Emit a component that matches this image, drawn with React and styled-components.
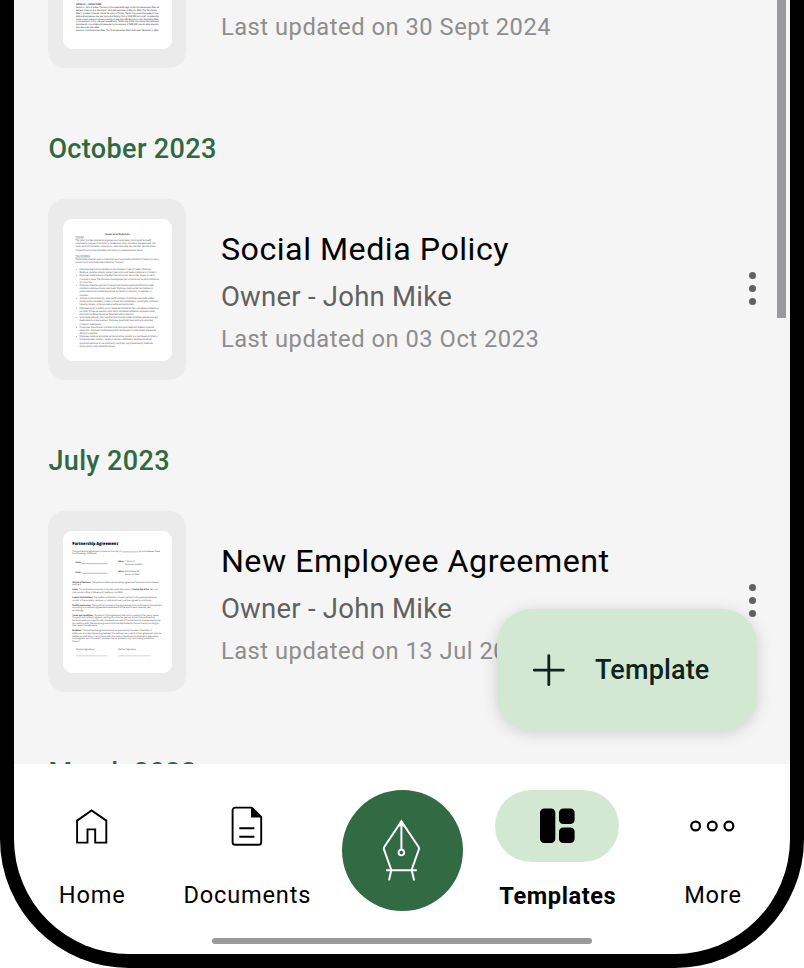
import React from "react"
import styled, { createGlobalStyle } from "styled-components"

const GlobalStyle = createGlobalStyle`
  *, *::before, *::after {
    box-sizing: border-box;
  }

  body {
    margin: 0;
    background: #fff;
    font-family: Roboto, "Liberation Sans", sans-serif;
  }
`

const Phone = styled.div`
  width: 804px;
  height: 968px;
  border: 14px solid #000;
  border-top: 0;
  border-radius: 0 0 129px 129px;
  background: #fff;
  overflow: hidden;
  display: flex;
  flex-direction: column;
`

const Screen = styled.main`
  position: relative;
  height: 764px;
  flex-shrink: 0;
  background: #f5f5f5;
  overflow: hidden;
`

const List = styled.div`
  margin-top: -113px;
  padding: 0 34px 0 34.4px;
`

const GroupTitle = styled.h2`
  margin: 64px 0 35px;
  height: 32px;
  line-height: 34px;
  font-size: 27px;
  font-weight: 500;
  letter-spacing: 0.36px;
  color: #2f6942;
  white-space: nowrap;
`

const Row = styled.article`
  display: flex;
  align-items: stretch;
  height: 181px;
`

const Thumb = styled.div`
  width: 138px;
  flex-shrink: 0;
  padding: 20px 14px 19px 14.4px;
  border-radius: 17px;
  background: #ebebeb;
`

const Paper = styled.svg`
  display: block;
  width: 109.6px;
  height: 142px;
  border-radius: 9px;
  background: #fff;
  font-family: ${props => props.$font};
  text-rendering: geometricPrecision;
`

const Details = styled.div`
  flex: 1;
  display: flex;
  flex-direction: column;
  justify-content: flex-end;
  padding: 0 0 25px 34.5px;
  white-space: nowrap;
`

const Name = styled.div`
  height: 48px;
  margin-bottom: 1px;
  line-height: 48px;
  font-size: 32.2px;
  letter-spacing: 0.52px;
  color: #000;
`

const Owner = styled.div`
  height: 46px;
  margin-bottom: 3px;
  line-height: 46px;
  font-size: 27.5px;
  letter-spacing: 0.25px;
  color: #616161;
`

const Updated = styled.div`
  height: 32px;
  line-height: 32px;
  font-size: 23.7px;
  letter-spacing: 0.53px;
  color: #8f8d8d;
`

const Kebab = styled.div`
  width: 7px;
  height: 33px;
  margin: 73px 0 0;
  display: flex;
  flex-direction: column;
  justify-content: space-between;

  span {
    width: 7px;
    height: 7px;
    border-radius: 50%;
    background: #616161;
  }
`

const ScrollThumb = styled.div`
  position: absolute;
  top: 0;
  right: 4px;
  width: 9px;
  height: 318px;
  background: #9b999e;
`

const Fab = styled.button`
  position: absolute;
  right: 33px;
  bottom: 34px;
  width: 260px;
  height: 121px;
  padding: 2px 0 0 35px;
  border: 0;
  border-radius: 35px;
  background: #d2e8d3;
  box-shadow: 0 3px 16px rgba(0, 0, 0, 0.16);
  display: flex;
  align-items: center;
  gap: 29px;
  font-family: inherit;
  font-size: 27px;
  font-weight: 500;
  letter-spacing: 0.15px;
  line-height: 33px;
  color: #10231a;
`

const NavBar = styled.nav`
  height: 174px;
  display: grid;
  grid-template-columns: repeat(5, 1fr);
`

const NavItem = styled.div`
  display: flex;
  flex-direction: column;
  align-items: center;
  padding-top: 26px;
`

const Pill = styled.div`
  width: 124px;
  height: 72px;
  border-radius: 36px;
  background: ${props => (props.$active ? "#d2e8d3" : "transparent")};
  display: flex;
  align-items: center;
  justify-content: center;
`

const NavLabel = styled.span`
  margin-top: ${props => (props.$active ? "18px" : "17px")};
  padding-left: 1.2px;
  height: 32px;
  line-height: 32px;
  font-size: 23.6px;
  font-weight: ${props => (props.$active ? 700 : 400)};
  letter-spacing: ${props => (props.$active ? "0.6px" : "0.8px")};
  color: #000;
`

const SignButton = styled.div`
  width: 121px;
  height: 121px;
  margin-left: 1px;
  border-radius: 50%;
  background: #326a44;
  display: flex;
  align-items: center;
  justify-content: center;
`

const HomeIndicator = styled.div`
  width: 380px;
  height: 6px;
  border-radius: 3px;
  background: #999;
  align-self: center;
`

const HomeIcon = () => (
  <svg width="36" height="40" viewBox="0 0 36 40" fill="none">
    <path
      d="M3.1 36.6V14.6L17.6 4.4L32.3 14.6V36.6H21.2V23.4H13.5V36.6Z"
      stroke="#000"
      strokeWidth="1.9"
    />
  </svg>
)

const DocumentIcon = () => (
  <svg width="36" height="40" viewBox="0 0 36 40" fill="none">
    <path
      d="M22.8 1.6H6.2A2.6 2.6 0 0 0 3.6 4.2V36.2A2.6 2.6 0 0 0 6.2 38.8H29.6A2.6 2.6 0 0 0 32.2 36.2V11Z"
      stroke="#000"
      strokeWidth="1.9"
      strokeLinejoin="round"
    />
    <path d="M22 1.4V11.5H32.5Z" fill="#000" />
    <path d="M10.3 22.3H25.4M10.3 30.7H25.4" stroke="#000" strokeWidth="1.9" />
  </svg>
)

const TemplatesIcon = () => (
  <svg width="36" height="40" viewBox="0 0 36 40">
    <rect x="1" y="2.4" width="15.3" height="34.7" rx="4.2" />
    <rect x="20" y="2.4" width="15.6" height="15.7" rx="4.2" />
    <rect x="20" y="21.4" width="15.6" height="15.7" rx="4.2" />
  </svg>
)

const MoreIcon = () => (
  <svg width="46" height="40" viewBox="0 0 46 40" fill="none">
    {[6.6, 23.3, 39.9].map(x => (
      <circle key={x} cx={x} cy="20" r="4.4" stroke="#000" strokeWidth="2.2" />
    ))}
  </svg>
)

const NibIcon = () => (
  <svg width="44" height="64" viewBox="0 0 44 64" fill="none">
    <path
      d="M11.3 51L3.9 30.2Q3.5 29 4.2 28L21.4 2.4L38.6 28Q39.3 29 38.9 30.2L31.6 51M6 51.2H36.8M11.3 51L9 61.4M31.6 51L34.2 61.4M21.4 6V30.4"
      stroke="#fff"
      strokeWidth="2"
    />
    <path d="M21.4 0.6L25.4 8L21.4 7L17.4 8Z" fill="#fff" />
    <circle cx="21.4" cy="33.5" r="2.8" stroke="#fff" strokeWidth="1.9" />
  </svg>
)

const PlusIcon = () => (
  <svg width="34" height="34" viewBox="0 0 34 34">
    <path
      d="M16.8 1.7V30.7M2.3 16.2H31.3"
      stroke="#10231a"
      strokeWidth="2.8"
      strokeLinecap="round"
    />
  </svg>
)

// each line: start x, baseline y, end x, text, bold
const leaseLines = [
  [107, 1, 160, "signed by the parties."],
  [107, 16, 183, "ARTICLE I - LEASE TERM", true],
  [107, 24, 357, "Section 1. Term of Lease. The term of this Lease shall begin on the Commencement Date, as"],
  [107, 33, 351, "defined in Section 2 of this Article I, and shall terminate on May 31, 2024 (The Termination"],
  [107, 42, 355, "Date\"), provided, however, that at the option of Tenant, Tenant may extend the Lease for five"],
  [107, 51, 356, "additional successive one-year terms at a Monthly Rent of $100,000 per month, provided that"],
  [107, 59, 355, "notice of such intention is given in writing no less than 180 days prior to the Termination Date"],
  [107, 67, 356, "or the expiration of any one-year renewal term. Tenant may at any time cancel this Lease and"],
  [107, 76, 355, "terminate all of its obligations hereunder by the payment of $300,000, plus all other amounts"],
  [107, 84, 178, "then due under this Lease."],
  [107, 93, 357, "Section 2. Commencement Date. The \"Commencement Date\" shall mean December 1, 2023."],
]

const policyLines = [
  [195, 133, 270, "Sample Social Media Policy", true],
  [106, 143, 130, "PURPOSE"],
  [106, 152, 334, "This policy provides guidance for employee use of social media, which should be broadly"],
  [106, 162, 347, "understood for purposes of this policy to include blogs, wikis, microblogs, message boards, chat"],
  [106, 172, 348, "rooms, electronic newsletters, online forums, social networking sites, and other sites and services"],
  [106, 182, 310, "that permit users to share information with others in a contemporaneous manner."],
  [106, 201, 149, "PROCEDURES"],
  [106, 211, 357, "The following principles apply to professional use of social media on behalf of [Company] as well as"],
  [106, 220, 252, "personal use of social media when referencing [Company]."],
  [118, 240, 332, "Employees need to know and adhere to the [Company's Code of Conduct, Employee"],
  [118, 249, 350, "Handbook, and other company policies] when using social media in reference to [Company]."],
  [118, 259, 345, "Employees should be aware of the effect their actions may have on their images, as well as"],
  [118, 269, 357, "[Company's] image. The information that employees post or publish may be public information"],
  [118, 278, 156, "for a long time."],
  [118, 288, 340, "Employees should be aware that [Company] may observe content and information made"],
  [118, 298, 338, "available by employees through social media. Employees should use their best judgment in"],
  [118, 307, 335, "posting material that is neither inappropriate nor harmful to [Company], its employees, or"],
  [118, 317, 145, "customers."],
  [118, 327, 343, "Although not an exclusive list, some specific examples of prohibited social media conduct"],
  [118, 336, 356, "include posting commentary, content, or images that are defamatory, pornographic, proprietary,"],
  [118, 346, 283, "harassing, libelous, or that can create a hostile work environment."],
  [118, 356, 357, "Employees are not to publish, post or release any information that is considered confidential or"],
  [118, 366, 344, "not public. If there are questions about what is considered confidential, employees should"],
  [118, 375, 282, "check with the Human Resources Department and/or supervisor."],
  [118, 385, 353, "Social media networks, blogs and other types of online content sometimes generate press and"],
  [118, 394, 339, "media attention or legal questions. Employees should refer these inquiries to authorized"],
  [118, 404, 185, "[Company] spokespersons."],
  [118, 414, 342, "If employees find encounter a situation while using social media that threatens to become"],
  [118, 423, 348, "antagonistic, employees should disengage from the dialogue in a polite manner and seek the"],
  [118, 433, 174, "advice of a supervisor."],
  [118, 443, 354, "Employees should get appropriate permission before you refer to or post images of current or"],
  [118, 452, 335, "former employees, members, vendors or suppliers. Additionally, employees should get"],
  [118, 462, 341, "appropriate permission to use a third party's copyrights, copyrighted material, trademarks,"],
  [118, 472, 226, "service marks or other intellectual property."],
]

const policyBullets = [238, 257, 286, 325, 354, 383, 412, 441]

const partnershipLines = [
  [96, 154, 243, "This partnership agreement is made on this day of"],
  [297, 154, 360, "by and between these"],
  [96, 162, 171, "the following individuals:"],
  [106, 190, 122, "Name:", true],
  [234, 187, 252, "Address:", true],
  [254, 187, 284, "17 Windsor St"],
  [254, 195, 306, "Sacramento, CA 94203"],
  [106, 219, 122, "Name:", true],
  [234, 215, 252, "Address:", true],
  [254, 215, 297, "4356 Parkway Dr"],
  [254, 224, 298, "Anaheim, CA 92805"],
  [96, 249, 153, "Nature of Business.", true],
  [155, 249, 357, "The partners listed above hereby agree that they shall be considered"],
  [96, 256, 123, "partners."],
  [96, 271, 114, "Name.", true],
  [116, 271, 275, "The partnership shall be conducted under the name of"],
  [277, 271, 340, "Carolyn Day & Son, Inc.", true],
  [343, 271, 354, "and"],
  [96, 279, 248, "shall maintain offices at 9 Bowman St, Westwood, CA 93550."],
  [96, 294, 158, "Capital Contributions.", true],
  [160, 294, 350, "The capital contribution of each partner to the partnership shall"],
  [96, 302, 335, "consist of the property, services, or cash which each partner agrees to contribute."],
  [96, 318, 153, "Profits and Losses.", true],
  [155, 318, 366, "The profits and losses of the partnership shall be divided by the partners"],
  [96, 325, 333, "according to a mutually agreeable schedule and at the end of each calendar year"],
  [96, 333, 131, "accordingly."],
  [96, 348, 160, "Terms and Conditions.", true],
  [162, 348, 356, "The terms of this agreement shall be for a period of ten years, unless"],
  [96, 355, 345, "the partners mutually agree in writing on a shorter period. Should the partnership"],
  [96, 363, 362, "be terminated by a majority vote, the assets and cash of the partnership shall be used to pay"],
  [96, 371, 356, "all creditors, with the remaining amounts to be distributed to the partners according to"],
  [96, 379, 172, "their proportionate share."],
  [96, 394, 125, "Disputes.", true],
  [127, 394, 335, "This partnership agreement shall be governed by the laws of the State of"],
  [96, 402, 363, "California. Any disputes arising between the partners as a result of this agreement shall be"],
  [96, 410, 356, "settled by arbitration in accordance with the rules of the American Arbitration Association"],
  [96, 417, 342, "and judgment upon the award rendered may be entered in any court having jurisdiction"],
  [96, 425, 119, "thereof."],
  [108, 452, 161, "Partner Signature"],
  [234, 452, 287, "Partner Signature"],
]

const DocLines = ({ lines, size, color }) =>
  lines.map(([x, y, end, text, bold]) => (
    <text
      key={`${x}-${y}`}
      x={x}
      y={y}
      fontSize={size}
      fontWeight={bold ? 700 : 400}
      fill={bold ? "#222" : color}
      textLength={end - x}
      lengthAdjust="spacingAndGlyphs"
    >
      {text}
    </text>
  ))

const LeasePage = () => (
  <Paper viewBox="68 -279 330 426" $font='"Liberation Sans", sans-serif'>
    <DocLines lines={leaseLines} size={7.4} color="#222" />
  </Paper>
)

const PolicyPage = () => (
  <Paper viewBox="68 87 330 426" $font='"Liberation Serif", serif'>
    <DocLines lines={policyLines} size={7.8} color="#333" />
    <path d="M106 145H130M106 203H149" stroke="#999" strokeWidth="1" />
    {policyBullets.map(y => (
      <circle key={y} cx="108" cy={y} r="1.4" fill="#555" />
    ))}
  </Paper>
)

const PartnershipPage = () => (
  <Paper viewBox="68 93 330 426" $font='"Open Sans", sans-serif'>
    <text
      x="96"
      y="135"
      fontSize="13"
      fontWeight="800"
      textLength="138"
      lengthAdjust="spacingAndGlyphs"
    >
      Partnership Agreement
    </text>
    <DocLines lines={partnershipLines} size={6.4} color="#222" />
    <path d="M245 155H295M124 190.5H202M124 219.5H202" stroke="#555" strokeWidth="1.2" />
    <path d="M108 468H202M234 468H332" stroke="#999" strokeWidth="1.2" />
  </Paper>
)

const TemplateRow = ({ page, name, owner, updated }) => (
  <Row>
    <Thumb>{page}</Thumb>
    <Details>
      {name && <Name>{name}</Name>}
      {owner && <Owner>{owner}</Owner>}
      <Updated>Last updated on {updated}</Updated>
    </Details>
    <Kebab>
      <span />
      <span />
      <span />
    </Kebab>
  </Row>
)

const NavTab = ({ icon, label, active }) => (
  <NavItem>
    <Pill $active={active}>{icon}</Pill>
    <NavLabel $active={active}>{label}</NavLabel>
  </NavItem>
)

const App = () => {
  return (
    <>
      <GlobalStyle />
      <Phone>
        <Screen>
          <List>
            <TemplateRow page={<LeasePage />} updated="30 Sept 2024" />
            <GroupTitle>October 2023</GroupTitle>
            <TemplateRow
              page={<PolicyPage />}
              name="Social Media Policy"
              owner="Owner - John Mike"
              updated="03 Oct 2023"
            />
            <GroupTitle>July 2023</GroupTitle>
            <TemplateRow
              page={<PartnershipPage />}
              name="New Employee Agreement"
              owner="Owner - John Mike"
              updated="13 Jul 2023"
            />
            <GroupTitle>March 2023</GroupTitle>
          </List>
          <ScrollThumb />
          <Fab>
            <PlusIcon />
            Template
          </Fab>
        </Screen>
        <NavBar>
          <NavTab icon={<HomeIcon />} label="Home" />
          <NavTab icon={<DocumentIcon />} label="Documents" />
          <NavItem>
            <SignButton>
              <NibIcon />
            </SignButton>
          </NavItem>
          <NavTab icon={<TemplatesIcon />} label="Templates" active />
          <NavTab icon={<MoreIcon />} label="More" />
        </NavBar>
        <HomeIndicator />
      </Phone>
    </>
  )
}

export default App
